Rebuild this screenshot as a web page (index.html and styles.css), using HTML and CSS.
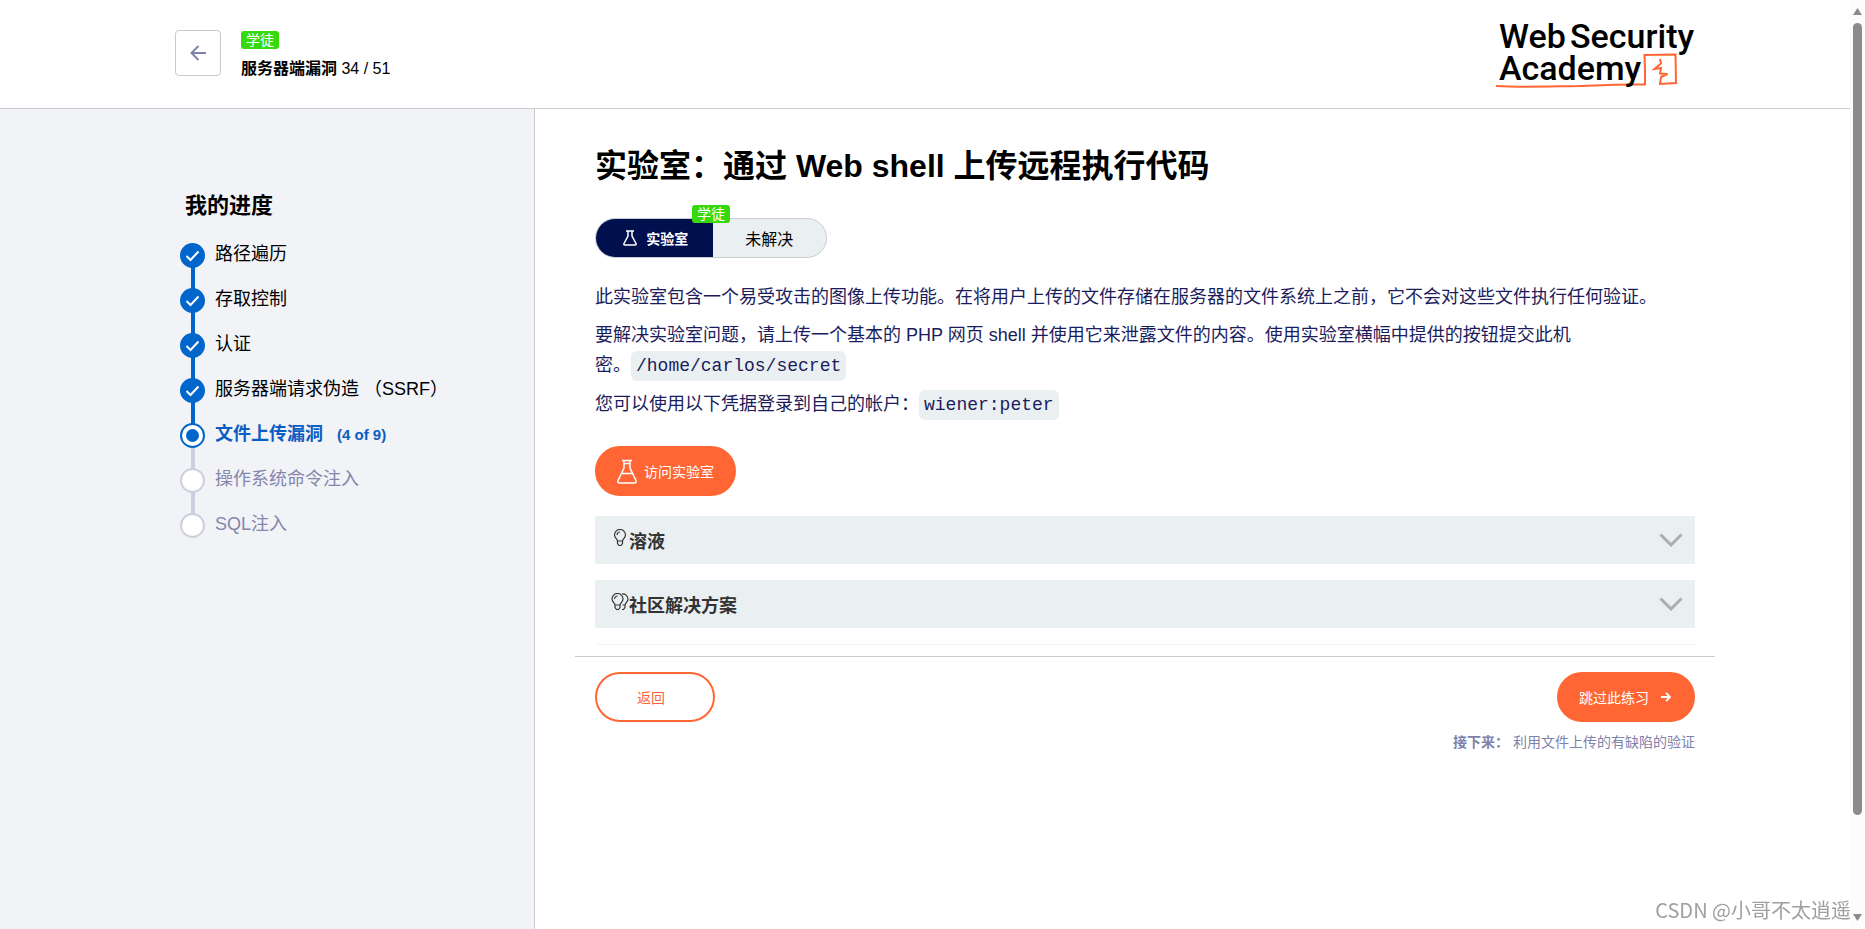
FILE: index.html
```html
<!DOCTYPE html>
<html lang="zh-CN">
<head>
    <meta charset="UTF-8">
    <meta name="viewport" content="width=device-width, initial-scale=1.0">
    <title>实验室：通过 Web shell 上传远程执行代码</title>
    <link rel="stylesheet" href="styles.css">
</head>
<body>

    <div class="page">
        <header class="header">
            <button class="back-btn" type="button" aria-label="返回">
                <svg width="16" height="16" viewBox="0 0 16 16" fill="none" stroke="#7f82ab" stroke-width="2"><path d="M16 8H1.5M8.500 1L1.500 8L8.500 15"/></svg>
            </button>
            <div class="header-title">
                <span class="badge">学徒</span>
                <p class="topic"><strong>服务器端漏洞</strong> 34 / 51</p>
            </div>
            <a class="logo" href="#" aria-label="Web Security Academy">
                <svg width="204" height="74" viewBox="0 0 204 74">
                    <path d="M5 71C30 72.500 55 71.500 88 71C113 70 133 69 154 69.500V56L153.500 40L184.500 39.500L185 68L169 69L170 62L176.500 59L169 58.500L170 53L163.500 54L170 48.500L169 44" fill="none" stroke="#ff6633" stroke-width="2"/>
                    <text class="logo-text" x="8" y="33">Web</text>
                    <text class="logo-text" x="79" y="33">Security</text>
                    <text class="logo-text" x="8" y="65">Academy</text>
                </svg>
            </a>
        </header>

        <div class="columns">
            <nav class="sidebar">
                <h2>我的进度</h2>
                <ol class="progress">
                    <li class="done"><span class="dot"><svg width="15" height="12" viewBox="0 0 15 12"><path d="M1.500 6L5.500 10L13.500 1.500"/></svg></span><a href="#">路径遍历</a></li>
                    <li class="done"><span class="dot"><svg width="15" height="12" viewBox="0 0 15 12"><path d="M1.500 6L5.500 10L13.500 1.500"/></svg></span><a href="#">存取控制</a></li>
                    <li class="done"><span class="dot"><svg width="15" height="12" viewBox="0 0 15 12"><path d="M1.500 6L5.500 10L13.500 1.500"/></svg></span><a href="#">认证</a></li>
                    <li class="done"><span class="dot"><svg width="15" height="12" viewBox="0 0 15 12"><path d="M1.500 6L5.500 10L13.500 1.500"/></svg></span><a href="#">服务器端请求伪造 （SSRF）</a></li>
                    <li class="current"><span class="dot"></span><a href="#">文件上传漏洞 <small>(4 of 9)</small></a></li>
                    <li class="todo"><span class="dot"></span><a href="#">操作系统命令注入</a></li>
                    <li class="todo"><span class="dot"></span><a href="#">SQL注入</a></li>
                </ol>
            </nav>

            <main class="content">
                <article class="lab">
                    <h1>实验室：通过 Web shell 上传远程执行代码</h1>

                    <div class="status">
                        <span class="status-type">
                            <svg width="14" height="16" viewBox="0 0 14 16" fill="none" stroke="#fff" stroke-width="1.500"><path d="M3 1H11M5 1V6L1 13.500Q.5 15 2 15H12Q13.500 15 13 13.500L9 6V1"/></svg>
                            实验室
                        </span>
                        <span class="status-state">未解决</span>
                        <span class="badge status-level">学徒</span>
                    </div>

                    <p>此实验室包含一个易受攻击的图像上传功能。在将用户上传的文件存储在服务器的文件系统上之前，它不会对这些文件执行任何验证。</p>
                    <p>要解决实验室问题，请上传一个基本的 PHP 网页 shell 并使用它来泄露文件的内容。使用实验室横幅中提供的按钮提交此机<br>密。<code>/home/carlos/secret</code></p>
                    <p>您可以使用以下凭据登录到自己的帐户：<code>wiener:peter</code></p>

                    <button class="btn btn-lab" type="button">
                        <svg width="20" height="25" viewBox="0 0 20 25" fill="none" stroke="#fff" stroke-width="1.500"><path d="M5 1.500H15M7 1.500V9L1 21.500Q.5 24 2.500 24H17.500Q19.500 24 19 21.500L13 9V1.500M7 4.500H13M4.500 14.500H15.500"/></svg>
                        访问实验室
                    </button>

                    <button class="accordion" type="button">
                        <svg class="bulb" width="18" height="18" viewBox="0 0 18 18"><path d="M6.500 12C6.500 10 3.500 9 3.500 6A5.500 5.500 0 0 1 14.500 6C14.500 9 11.500 10 11.500 12ZM6.500 12V14.500L8 16.500H10L11.500 14.500V12M6 6A3 3 0 0 1 9 3"/></svg>
                        <span>溶液</span>
                        <svg class="chevron" width="24" height="14" viewBox="0 0 24 14"><path d="M1.500 1.500L12 12L22.500 1.500"/></svg>
                    </button>
                    <button class="accordion" type="button">
                        <svg class="bulb" width="18" height="18" viewBox="0 0 18 18"><path d="M4 12C4 10 1 9 1 6A5.500 5.500 0 0 1 12 6C12 9 9 10 9 12ZM4 12V14.500L5.500 16.500H7.500L9 14.500V12M3.500 6A3 3 0 0 1 6.500 3M11 1A5.200 5.200 0 0 1 17 6C17 9 14 10 14 12V14.500L12.500 16.500H11M11.500 12H14"/></svg>
                        <span>社区解决方案</span>
                        <svg class="chevron" width="24" height="14" viewBox="0 0 24 14"><path d="M1.500 1.500L12 12L22.500 1.500"/></svg>
                    </button>
                </article>

                <footer class="lab-nav">
                    <button class="btn btn-outline" type="button">返回</button>
                    <div class="next">
                        <button class="btn btn-skip" type="button">
                            跳过此练习
                            <svg width="10" height="10" viewBox="0 0 10 10" fill="none" stroke="#fff" stroke-width="1.800"><path d="M0 5H9M5 .8L9 5L5 9.200"/></svg>
                        </button>
                        <p><strong>接下来：</strong> 利用文件上传的有缺陷的验证</p>
                    </div>
                </footer>
            </main>
        </div>
    </div>

    <div class="scrollbar">
        <svg width="9" height="7" viewBox="0 0 9 7"><path d="M4.500 0L9 7H0Z" fill="#8b8b8b"/></svg>
        <div class="thumb"></div>
        <svg width="9" height="7" viewBox="0 0 9 7"><path d="M0 0H9L4.500 7Z" fill="#8b8b8b"/></svg>
    </div>

    <div class="watermark">CSDN @小哥不太逍遥</div>

</body>
</html>
```
FILE: styles.css
```css
* {
    margin: 0;
    padding: 0;
    box-sizing: border-box;
}
body {
    display: flex;
    height: 100vh;
    overflow: hidden;
    background: #fff;
    color: #000;
    font-family: "Liberation Sans", "Noto Sans CJK SC", sans-serif;
    font-size: 18px;
}
button {
    font-family: inherit;
    cursor: pointer;
}
a {
    color: inherit;
    text-decoration: none;
}
.page {
    flex: 1;
    display: flex;
    flex-direction: column;
}

/* header */
.header {
    display: flex;
    align-items: flex-start;
    height: 109px;
    padding: 0 155px 0 175px;
    border-bottom: 1px solid #c8cccc;
}
.back-btn {
    display: flex;
    align-items: center;
    justify-content: center;
    width: 46px;
    height: 46px;
    margin-top: 30px;
    background: #fff;
    border: 1px solid #c5cccc;
    border-radius: 4px;
}
.header-title {
    flex: 1;
    margin: 31px 0 0 20px;
}
.badge {
    display: block;
    width: 38px;
    height: 18px;
    border-radius: 3px;
    background: #37d80d;
    color: #fff;
    font-size: 14px;
    line-height: 18px;
    text-align: center;
}
.topic {
    margin-top: 8px;
    font-size: 16px;
    line-height: 24px;
}
.logo {
    margin-top: 15px;
}
.logo svg {
    display: block;
}
.logo-text {
    font-family: Roboto, sans-serif;
    font-size: 34px;
    font-weight: 500;
}

/* sidebar */
.columns {
    flex: 1;
    display: flex;
}
.sidebar {
    width: 535px;
    padding: 81px 20px 0 180px;
    background: #f1f3f7;
    border-right: 1px solid #c8cccc;
}
.sidebar h2 {
    padding-left: 5px;
    font-size: 22px;
    line-height: 32px;
}
.progress {
    margin-top: 21px;
    list-style: none;
}
.progress li {
    position: relative;
    display: flex;
    gap: 10px;
    height: 45px;
    line-height: 22px;
}
.progress li:not(:last-child)::before {
    content: "";
    position: absolute;
    top: 20px;
    left: 11px;
    width: 4px;
    height: 30px;
    background: #0066cc;
}
.progress .current::before,
.progress .todo::before {
    background: #cdcfde !important;
}
.dot {
    position: relative;
    display: flex;
    align-items: center;
    justify-content: center;
    width: 25px;
    height: 25px;
    border: 2px solid #0066cc;
    border-radius: 50%;
    background: #fff;
}
.dot path {
    fill: none;
    stroke: #fff;
    stroke-width: 2;
}
.done .dot {
    background: #0066cc;
}
.current {
    color: #0a5dc2;
    font-weight: bold;
}
.current .dot::after {
    content: "";
    width: 13px;
    height: 13px;
    border-radius: 50%;
    background: #0066cc;
}
.current small {
    margin-left: 9px;
    font-size: 15px;
}
.todo {
    color: #8486ab;
}
.todo .dot {
    border-color: #cdcfde;
}

/* main column */
.content {
    flex: 1;
    padding: 38px 135px 0 40px;
}
.lab {
    padding: 0 20px 16px;
}
.lab h1 {
    font-size: 32px;
    line-height: 38px;
}
.status {
    position: relative;
    display: flex;
    width: 232px;
    height: 40px;
    margin: 33px 0 24px;
    border: 1px solid #c8cdd0;
    border-radius: 20px;
    background: #eaeff2;
}
.status-type,
.status-state {
    flex: 1;
    display: flex;
    align-items: center;
    justify-content: center;
    font-size: 16px;
}
.status-type {
    gap: 9px;
    padding-left: 3px;
    border-radius: 19px 0 0 19px;
    background: #00104f;
    color: #fff;
    font-size: 14px;
    font-weight: bold;
}
.status-level {
    position: absolute;
    top: -14px;
    left: 96px;
}
.lab p {
    margin-bottom: 8px;
    color: #1b1c5c;
    line-height: 30px;
}
code {
    padding: 5px;
    border-radius: 6px;
    background: #eaeff2;
    font-family: "Liberation Mono", monospace;
    font-size: 18px;
}
.btn {
    display: flex;
    align-items: center;
    height: 50px;
    border: 2px solid #ff6633;
    border-radius: 25px;
    background: #ff6633;
    color: #fff;
    font-size: 14px;
}
.btn-lab {
    gap: 7px;
    margin: 26px 0 20px;
    padding: 0 20px;
}
.accordion {
    display: flex;
    align-items: center;
    width: 100%;
    height: 48px;
    margin-bottom: 16px;
    padding: 0 12px 0 16px;
    border: none;
    background: #eaeff2;
    color: #333;
    font-size: 18px;
    font-weight: bold;
}
.accordion span {
    flex: 1;
    text-align: left;
}
.bulb {
    margin-bottom: 4px;
}
.bulb path {
    fill: none;
    stroke: #333;
    stroke-width: 1.2;
}
.chevron path {
    fill: none;
    stroke: #adadad;
    stroke-width: 3;
}
.lab::after {
    content: "";
    display: block;
    margin-bottom: -5px;
    border-top: 1px solid #f3f4f4;
}
.lab-nav {
    display: flex;
    justify-content: space-between;
    align-items: flex-start;
    padding: 15px 20px;
    border-top: 1px solid #c8cccc;
}
.btn-outline {
    padding: 0 48px 0 40px;
    background: #fff;
    color: #ff6633;
}
.next {
    display: flex;
    flex-direction: column;
    align-items: flex-end;
    gap: 10px;
    color: #7f82ab;
    font-size: 14px;
    line-height: 20px;
}
.btn-skip {
    gap: 12px;
    padding: 0 22px 0 20px;
}

/* scrollbar */
.scrollbar {
    display: flex;
    flex-direction: column;
    align-items: center;
    gap: 8px;
    width: 15px;
    padding: 8px 0;
    background: #fcfcfc;
}
.thumb {
    flex: 0 0 auto;
    width: 9px;
    height: 85.2vh;
    margin-bottom: auto;
    border-radius: 5px;
    background: #8b8b8b;
}
.watermark {
    position: fixed;
    right: 14px;
    bottom: 4px;
    color: #a0a0a0;
    font-family: "Noto Sans CJK SC", sans-serif;
    font-size: 20px;
    line-height: 30px;
    text-shadow: -1px -1px 0 #fff;
}
```
